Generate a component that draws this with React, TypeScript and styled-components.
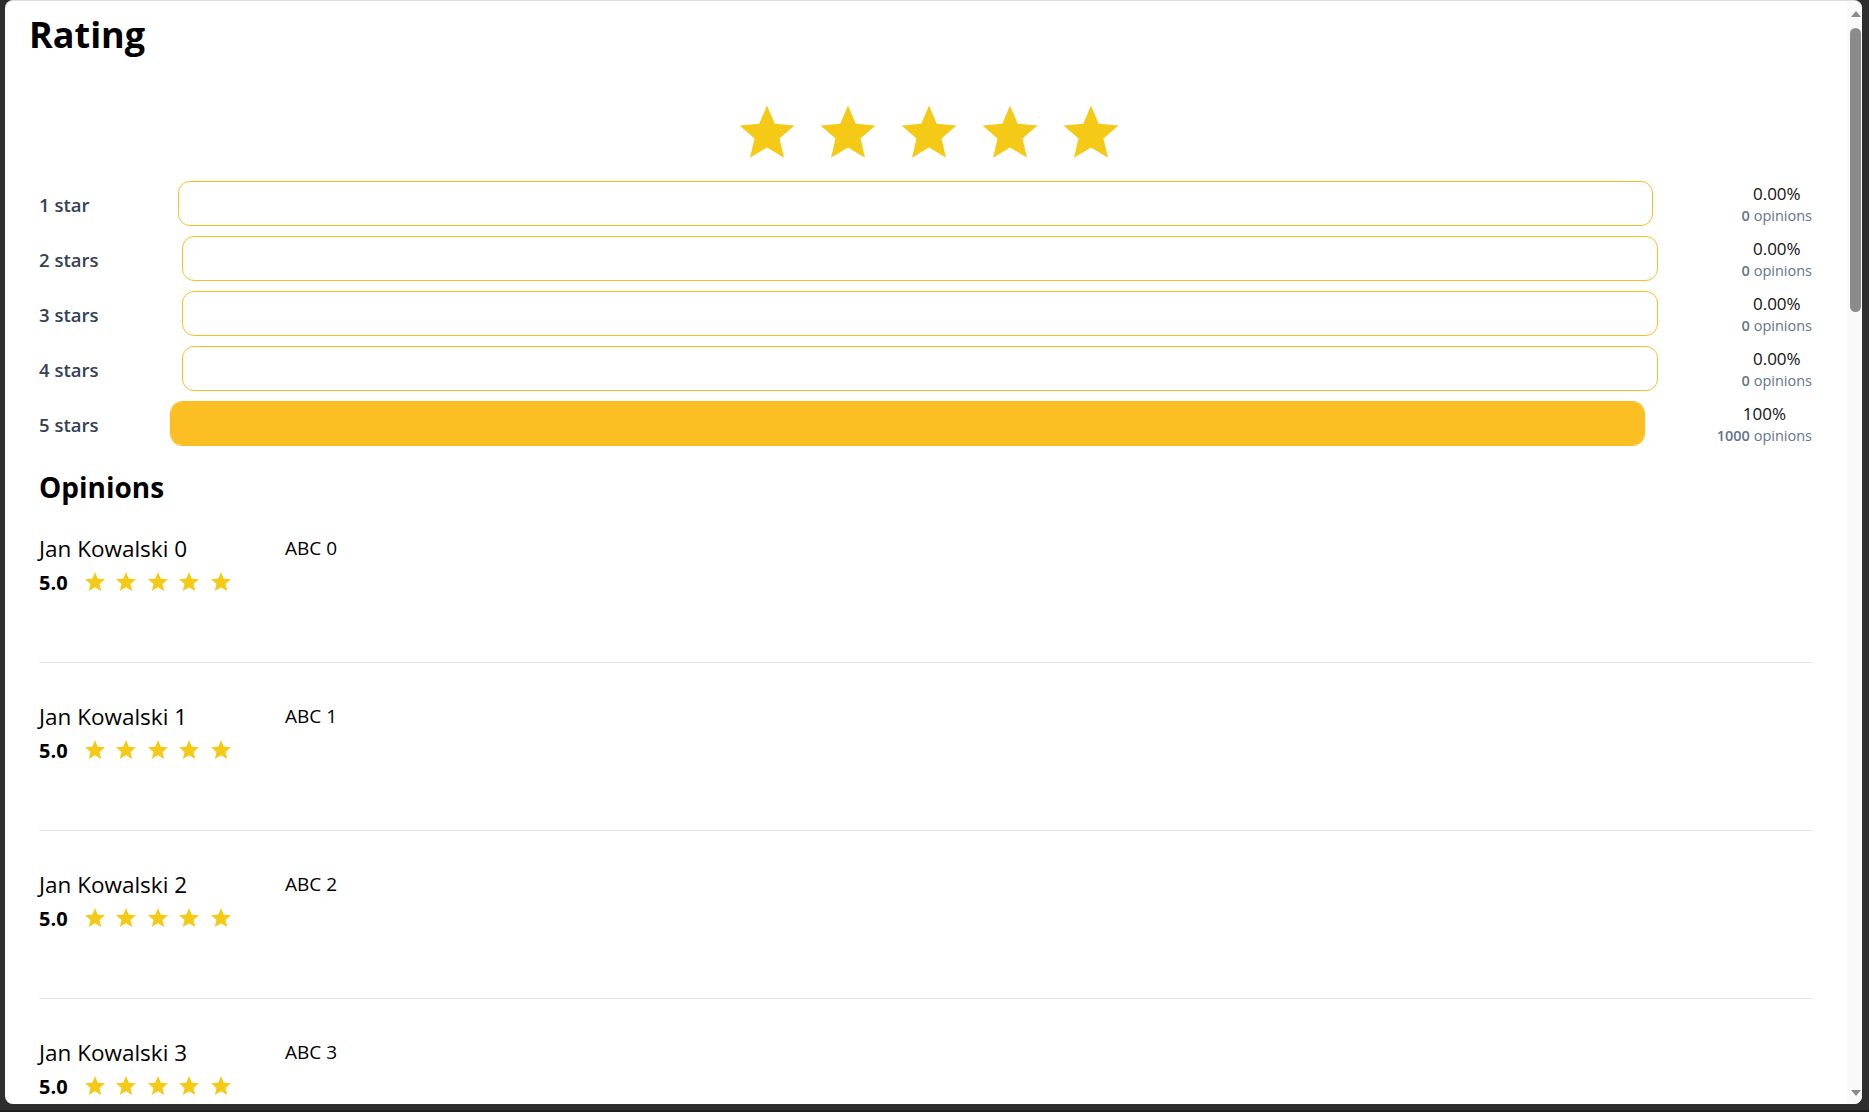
import React from "react";
import styled, { createGlobalStyle } from "styled-components";
import { MdStar } from "react-icons/md";

const GlobalStyle = createGlobalStyle`
  html, body {
    margin: 0;
    padding: 0;
    height: 100%;
    overflow: hidden;
  }
  body {
    font-family: "Open Sans", "Noto Sans", Arial, sans-serif;
    color: #000;
  }
  #root {
    height: 100%;
  }
`;

const distribution = [
  { label: "1 star", percent: "0.00%", count: 0, fill: 0 },
  { label: "2 stars", percent: "0.00%", count: 0, fill: 0 },
  { label: "3 stars", percent: "0.00%", count: 0, fill: 0 },
  { label: "4 stars", percent: "0.00%", count: 0, fill: 0 },
  { label: "5 stars", percent: "100%", count: 1000, fill: 100 },
];

const opinions = Array.from({ length: 4 }, (_, i) => ({
  author: `Jan Kowalski ${i}`,
  score: "5.0",
  text: `ABC ${i}`,
}));

function Rating() {
  return (
    <Frame>
      <GlobalStyle />
      <Panel>
        <Content>
          <Title>Rating</Title>
          <Body>
            <BigStars>
              {[0, 1, 2, 3, 4].map((i) => (
                <MdStar key={i} />
              ))}
            </BigStars>

            <Bars>
              {distribution.map((row) => (
                <BarRow key={row.label}>
                  <BarLabel>{row.label}</BarLabel>
                  <BarTrack $full={row.fill === 100}>
                    <BarFill style={{ width: `${row.fill}%` }} />
                  </BarTrack>
                  <Stats>
                    <Percent>{row.percent}</Percent>
                    <Count>
                      <b>{row.count}</b> opinions
                    </Count>
                  </Stats>
                </BarRow>
              ))}
            </Bars>

            <SectionTitle>Opinions</SectionTitle>
            <OpinionList>
              {opinions.map((op) => (
                <OpinionItem key={op.author}>
                  <Author>
                    <AuthorName>{op.author}</AuthorName>
                    <ScoreRow>
                      <Score>{op.score}</Score>
                      <SmallStars>
                        {[0, 1, 2, 3, 4].map((i) => (
                          <MdStar key={i} />
                        ))}
                      </SmallStars>
                    </ScoreRow>
                  </Author>
                  <OpinionText>{op.text}</OpinionText>
                </OpinionItem>
              ))}
            </OpinionList>
          </Body>
        </Content>

        <ScrollBar>
          <ScrollButton $dir="up">
            <Arrow $dir="up" />
          </ScrollButton>
          <ScrollTrack>
            <ScrollThumb />
          </ScrollTrack>
          <ScrollButton $dir="down">
            <Arrow $dir="down" />
          </ScrollButton>
        </ScrollBar>
      </Panel>
    </Frame>
  );
}

const Frame = styled.div`
  box-sizing: border-box;
  height: 100vh;
  padding: 0 7px 6px 5px;
  background: #2e2e2e;
  border-bottom: 2px solid #1f1f1f;
`;

const Panel = styled.main`
  box-sizing: border-box;
  height: 100%;
  display: flex;
  background: #fff;
  border-top: 1px solid #dcdcdc;
  border-radius: 8px;
  overflow: hidden;
`;

const Content = styled.div`
  flex: 1;
  min-width: 0;
  overflow: hidden;
  padding-top: 12px;
`;

const ScrollBar = styled.div`
  width: 15px;
  flex-shrink: 0;
  display: flex;
  flex-direction: column;
  background: #f9f9f9;
`;

const ScrollButton = styled.div<{ $dir: "up" | "down" }>`
  height: ${(p) => (p.$dir === "up" ? "27px" : "22px")};
  display: flex;
  justify-content: center;
  align-items: flex-start;
  padding-left: 2px;
  padding-top: ${(p) => (p.$dir === "up" ? "10px" : "8px")};
  box-sizing: border-box;
`;

const Arrow = styled.span<{ $dir: "up" | "down" }>`
  width: 0;
  height: 0;
  border-left: 5px solid transparent;
  border-right: 5px solid transparent;
  ${(p) =>
    p.$dir === "up"
      ? "border-bottom: 6px solid #8a8a8a;"
      : "border-top: 6px solid #8a8a8a;"}
`;

const ScrollTrack = styled.div`
  flex: 1;
  padding-left: 3px;
`;

const ScrollThumb = styled.div`
  width: 11px;
  height: 284px;
  border-radius: 6px;
  background: #8b8b8b;
`;

const Title = styled.h1`
  margin: 0;
  padding: 0 24px;
  font-size: 36px;
  line-height: 44px;
  font-weight: 700;
`;

const Body = styled.div`
  padding: 0 35px 0 34px;
`;

const BigStars = styled.div`
  display: flex;
  justify-content: center;
  gap: 15px;
  margin-top: 43px;
  padding-left: 6px;
  color: #f5ca16;

  svg {
    display: block;
    width: 66px;
    height: 66px;
  }
`;

const Bars = styled.div`
  display: flex;
  flex-direction: column;
  gap: 10px;
  margin-top: 15px;
`;

const BarRow = styled.div`
  display: flex;
  align-items: center;
  justify-content: space-between;
`;

const BarLabel = styled.span`
  font-size: 18.5px;
  font-weight: 600;
  color: #334155;
  white-space: nowrap;
  padding-top: 2px;
`;

const BarTrack = styled.div<{ $full: boolean }>`
  box-sizing: border-box;
  width: 83.2%;
  height: 45px;
  border: 1px solid #fbbf24;
  border-radius: 12px;
  overflow: hidden;
  background: ${(p) => (p.$full ? "#fbbf24" : "#fff")};
`;

const BarFill = styled.div`
  height: 100%;
  background: #fbbf24;
`;

const Stats = styled.div`
  text-align: center;
  white-space: nowrap;
`;

const Percent = styled.div`
  font-size: 17px;
  line-height: 24px;
  font-weight: 500;
  color: #111;
`;

const Count = styled.div`
  font-size: 14.5px;
  line-height: 20px;
  color: #64748b;

  b {
    font-weight: 600;
  }
`;

const SectionTitle = styled.h2`
  margin: 23px 0 0;
  font-size: 28px;
  line-height: 36px;
  font-weight: 700;
`;

const OpinionList = styled.div`
  display: flex;
  flex-direction: column;
  gap: 10px;
`;

const OpinionItem = styled.div`
  display: flex;
  padding: 29px 0 66px;
  border-bottom: 1px solid #e5e7eb;
`;

const Author = styled.div`
  width: 246px;
  flex-shrink: 0;
`;

const AuthorName = styled.div`
  font-size: 22.5px;
  line-height: 30px;
`;

const Score = styled.span`
  font-size: 20px;
  font-weight: 700;
`;

const ScoreRow = styled.div`
  display: flex;
  align-items: center;
  gap: 15px;
  margin-top: 4px;
  height: 28px;
`;

const SmallStars = styled.div`
  display: flex;
  gap: 7.5px;
  color: #f5ca16;

  svg {
    display: block;
    width: 24px;
    height: 24px;
  }
`;

const OpinionText = styled.div`
  font-size: 19px;
  line-height: 28px;
`;

export default Rating;
